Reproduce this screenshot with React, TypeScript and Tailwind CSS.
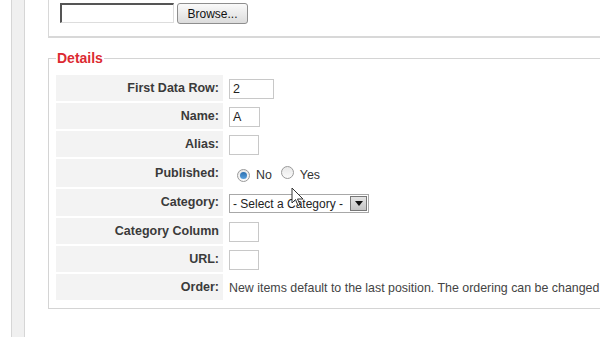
import type { ReactNode } from "react";

type Row = { label: string; h: string; field: ReactNode };

const TextBox = ({ w, value }: { w: string; value?: string }) => (
  <div className={`${w} h-[20px] border border-[#c8c8c8] bg-white px-[3px] text-[12.5px] leading-[18px] text-[#222]`}>
    {value}
  </div>
);

const Radio = ({ checked }: { checked?: boolean }) => (
  <span className="inline-flex h-[13px] w-[13px] items-center justify-center rounded-full border border-[#9a9a9a] bg-gradient-to-b from-[#e8e8e8] to-[#fafafa]">
    {checked && <span className="h-[7px] w-[7px] rounded-full bg-gradient-to-b from-[#2a6fb0] to-[#5aa0dc]" />}
  </span>
);

const rows: Row[] = [
  { label: "First Data Row:", h: "h-[28px]", field: <TextBox w="w-[45px]" value="2" /> },
  { label: "Name:", h: "h-[28px]", field: <TextBox w="w-[31px]" value="A" /> },
  { label: "Alias:", h: "h-[28px]", field: <TextBox w="w-[30px]" /> },
  {
    label: "Published:",
    h: "h-[30px]",
    field: (
      <div className="flex items-center pl-[8px] pt-[3px] text-[12.4px] text-[#333]">
        <Radio checked />
        <span className="ml-[6px]">No</span>
        <span className="ml-[9px]"><Radio /></span>
        <span className="ml-[6px]">Yes</span>
      </div>
    ),
  },
  {
    label: "Category:",
    h: "h-[29px]",
    field: (
      <div className="flex h-[19px] w-[140px] items-center border border-[#a8a8a8] bg-white pl-[3px] text-[12px] text-[#222]">
        <span className="flex-1 whitespace-nowrap">- Select a Category -</span>
        <span className="mr-[1px] flex h-[15px] w-[17px] items-center justify-center border border-[#777] bg-gradient-to-b from-[#e4e4e4] to-[#c4c4c4]">
          <svg width="8" height="5" viewBox="0 0 8 5"><path d="M0 0h8L4 5z" fill="#111" /></svg>
        </span>
      </div>
    ),
  },
  { label: "Category Column", h: "h-[28px]", field: <TextBox w="w-[30px]" /> },
  { label: "URL:", h: "h-[28px]", field: <TextBox w="w-[30px]" /> },
  {
    label: "Order:",
    h: "h-[28px]",
    field: (
      <span className="whitespace-nowrap text-[12.4px] text-[#444]">
        New items default to the last position. The ordering can be changed
      </span>
    ),
  },
];

export default function App() {
  return (
    <div className="relative flex h-[337px] w-[600px] overflow-hidden bg-white font-['Liberation_Sans',Arial,sans-serif]">
      {/* left strip */}
      <div className="ml-[11px] h-full w-[14px] shrink-0 border-x border-[#d6d6d6] bg-[#f0f0f0]" />

      <div className="ml-[23px] flex min-w-0 flex-1 flex-col">
        {/* upload panel */}
        <div className="flex h-[38px] items-start gap-[3px] border-b-2 border-l border-[#d8d8d8] pl-[11px] pt-[3px]">
          <div className="h-[20px] w-[114px] border-b border-l-2 border-r border-t-2 border-b-[#ddd] border-l-[#555] border-r-[#ddd] border-t-[#555] bg-white" />
          <button className="h-[21px] w-[71px] rounded-[3px] border border-[#8e8e8e] bg-gradient-to-b from-[#fafafa] to-[#dcdcdc] text-[12px] text-[#111]">
            Browse...
          </button>
        </div>

        {/* details */}
        <fieldset className="mt-[13px] min-w-0 border-y border-l border-[#d4d4d4] pb-[6px] pl-[7px]">
          <legend className="px-[1px] text-[14px] font-bold leading-[14px] text-[#dc2a32]">Details</legend>
          <div className="mt-[10px] flex flex-col">
            {rows.map((r) => (
              <div key={r.label} className={`flex ${r.h}`}>
                <div className="flex w-[167px] shrink-0 items-center justify-end border-b-2 border-white bg-[#f3f3f3] pr-[4px] text-[12.5px] font-bold text-[#3a3a3a]">
                  {r.label}
                </div>
                <div className="flex items-center pl-[6px]">{r.field}</div>
              </div>
            ))}
          </div>
        </fieldset>
      </div>

      {/* mouse cursor */}
      <svg className="absolute left-[291px] top-[187px]" width="13" height="20" viewBox="0 0 13 20">
        <path d="M1 1v15l3.5-3.5 2.5 6 2-1-2.5-5.5H12z" fill="#fff" stroke="#333" strokeWidth="1" />
      </svg>
    </div>
  );
}
